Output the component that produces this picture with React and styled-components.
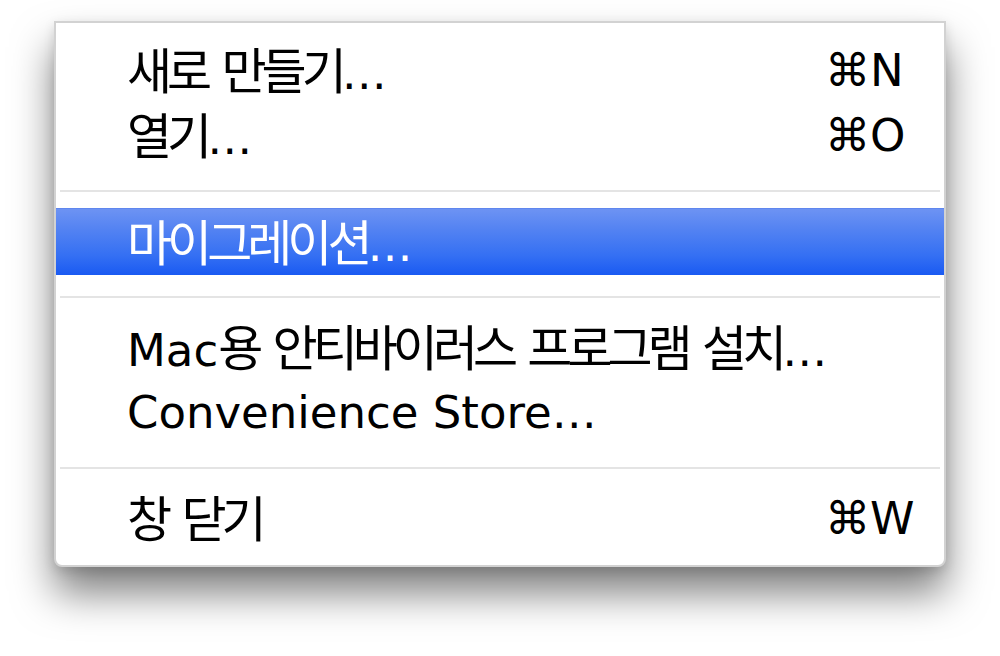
import React from 'react';
import styled, { createGlobalStyle } from 'styled-components';

const GlobalStyle = createGlobalStyle`
    html, body {
        margin: 0;
        padding: 0;
        background: #ffffff;
    }
    body {
        font-family: "DejaVu Sans", "Noto Sans CJK KR", sans-serif;
    }
`;

const items = [
    { label: '새로 만들기…', shortcut: '⌘N' },
    { label: '열기…', shortcut: '⌘O' },
    { separator: true },
    { label: '마이그레이션…', selected: true },
    { separator: true },
    { label: 'Mac용 안티바이러스 프로그램 설치…' },
    { label: 'Convenience Store…' },
    { separator: true },
    { label: '창 닫기', shortcut: '⌘W' },
];

// hangul runs get their own span so the CJK face can be sized on its own
const splitHangul = text =>
    text.split(/([\uAC00-\uD7A3]+)/).map((part, i) =>
        /[\uAC00-\uD7A3]/.test(part) ? <Hangul key={i}>{part}</Hangul> : part
    );

const App = () => {
    return (
        <>
            <GlobalStyle />
            <Page>
                <Menu>
                    {items.map((item, i) =>
                        item.separator ? (
                            <Separator key={i} />
                        ) : (
                            <Item key={i} selected={item.selected}>
                                <Label>{splitHangul(item.label)}</Label>
                                <Shortcut>{item.shortcut}</Shortcut>
                            </Item>
                        )
                    )}
                </Menu>
            </Page>
        </>
    );
};

export default App;

const Page = styled.div`
    display: flex;
    justify-content: center;
    align-items: flex-start;
    width: 1000px;
    height: 656px;
    padding-top: 21px;
    box-sizing: border-box;
    overflow: hidden;
`;

const Menu = styled.div`
    width: 892px;
    box-sizing: border-box;
    padding: 15px 0 14px;
    background: #ffffff;
    border: 2px solid #d2d2d2;
    border-radius: 0 0 8px 8px;
    box-shadow: 0 26px 40px rgba(0, 0, 0, 0.5), 0 4px 12px rgba(0, 0, 0, 0.12);
    display: flex;
    flex-direction: column;
`;

const Item = styled.div`
    display: flex;
    align-items: center;
    height: ${props => (props.selected ? '67px' : '65px')};
    margin: ${props => (props.selected ? '-1px 0' : '0')};
    padding-left: 71px;
    font-size: 45px;
    line-height: 65px;
    color: ${props => (props.selected ? '#ffffff' : '#000000')};
    background: ${props =>
        props.selected
            ? 'linear-gradient(to bottom, #6d93f3 0%, #5483f2 30%, #3570f3 70%, #1a5af2 100%)'
            : 'transparent'};
    border-top: ${props => (props.selected ? '1px solid #5f86ee' : 'none')};
    box-sizing: border-box;
    white-space: nowrap;
`;

const Label = styled.span`
    flex: 1;
`;

const Hangul = styled.span`
    font-family: "Noto Sans CJK KR", sans-serif;
    font-size: 49px;
    letter-spacing: -5px;
`;

const Shortcut = styled.span`
    width: 119px;
`;

const Separator = styled.div`
    height: 41px;
    display: flex;
    align-items: center;
    padding: 0 4px;
    &::after {
        content: '';
        flex: 1;
        height: 2px;
        margin-top: 4px;
        background: #e4e4e4;
    }
`;
